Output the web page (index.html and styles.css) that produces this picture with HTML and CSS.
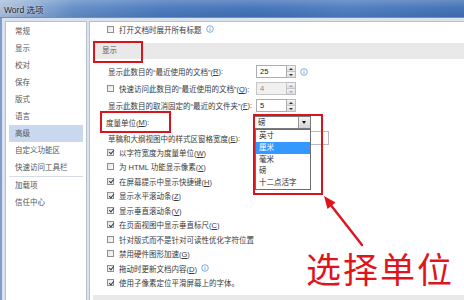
FILE: index.html
```html
<!DOCTYPE html>
<html lang="zh-CN">
<head>
<meta charset="utf-8">
<title>Word 选项</title>
<link rel="stylesheet" href="styles.css">
</head>
<body>
<div class="window">
  <div class="titlebar"><span class="title">Word 选项</span></div>
  <div class="main">
    <nav class="nav">
      <div class="nav-item">常规</div>
      <div class="nav-item">显示</div>
      <div class="nav-item">校对</div>
      <div class="nav-item">保存</div>
      <div class="nav-item">版式</div>
      <div class="nav-item">语言</div>
      <div class="nav-item active">高级</div>
      <div class="nav-item">自定义功能区</div>
      <div class="nav-item">快速访问工具栏</div>
      <div class="nav-sep"></div>
      <div class="nav-item">加载项</div>
      <div class="nav-item">信任中心</div>
    </nav>
    <section class="content">
      <div class="row cbrow top"><span class="cb"></span><span>打开文档时展开所有标题</span><svg class="info" viewBox="0 0 8 8"><circle cx="4" cy="4" r="3.3"/><path d="M4 3.4V6M4 2v.7"/></svg></div>
      <div class="section-head">显示</div>
      <div class="fields">
        <div class="row field">
          <span class="lbl">显示此数目的“最近使用的文档”(<u>R</u>):</span>
          <span class="spin"><span class="box">25</span><span class="btns"><i class="up"></i><i class="dn"></i></span></span>
          <svg class="info" viewBox="0 0 8 8"><circle cx="4" cy="4" r="3.3"/><path d="M4 3.4V6M4 2v.7"/></svg>
        </div>
        <div class="row field">
          <span class="lbl"><span class="cb"></span><span class="cbtext">快速访问此数目的“最近使用的文档”(<u>Q</u>):</span></span>
          <span class="spin disabled"><span class="box">4</span><span class="btns"><i class="up"></i><i class="dn"></i></span></span>
        </div>
        <div class="row field">
          <span class="lbl">显示此数目的取消固定的“最近的文件夹”(<u>F</u>):</span>
          <span class="spin"><span class="box">5</span><span class="btns"><i class="up"></i><i class="dn"></i></span></span>
        </div>
        <div class="row field">
          <span class="lbl unit">度量单位(<u>M</u>):</span>
          <span class="select"><span class="sel-val">磅</span><span class="sel-btn"><i></i></span></span>
        </div>
        <div class="row field short">
          <span class="lbl">草稿和大纲视图中的样式区窗格宽度(<u>E</u>):</span>
          <span class="wide-box"></span>
        </div>
      </div>
      <div class="checks">
        <div class="row cbrow"><span class="cb on"></span><span>以字符宽度为度量单位(<u>W</u>)</span></div>
        <div class="row cbrow"><span class="cb"></span><span>为 HTML 功能显示像素(<u>X</u>)</span></div>
        <div class="row cbrow"><span class="cb on"></span><span>在屏幕提示中显示快捷键(<u>H</u>)</span></div>
        <div class="row cbrow"><span class="cb on"></span><span>显示水平滚动条(<u>Z</u>)</span></div>
        <div class="row cbrow"><span class="cb on"></span><span>显示垂直滚动条(<u>V</u>)</span></div>
        <div class="row cbrow"><span class="cb on"></span><span>在页面视图中显示垂直标尺(<u>C</u>)</span></div>
        <div class="row cbrow"><span class="cb"></span><span>针对版式而不是针对可读性优化字符位置</span></div>
        <div class="row cbrow"><span class="cb"></span><span>禁用硬件图形加速(<u>G</u>)</span></div>
        <div class="row cbrow"><span class="cb on"></span><span>拖动时更新文档内容(<u>D</u>)</span><svg class="info" viewBox="0 0 8 8"><circle cx="4" cy="4" r="3.3"/><path d="M4 3.4V6M4 2v.7"/></svg></div>
        <div class="row cbrow"><span class="cb on"></span><span>使用子像素定位平滑屏幕上的字体。</span></div>
      </div>
      <div class="section-head next"></div>
    </section>
  </div>

  <ul class="droplist">
    <li>英寸</li>
    <li class="hi">厘米</li>
    <li>毫米</li>
    <li>磅</li>
    <li>十二点活字</li>
  </ul>

  <div class="mark mark-show"></div>
  <div class="mark mark-unit"></div>
  <div class="mark mark-drop"></div>
  <svg class="arrow" viewBox="315 190 60 65" width="60" height="65">
    <line x1="362" y1="245" x2="330" y2="204" stroke="#e0141c" stroke-width="2.4" stroke-linecap="round"/>
    <polygon points="324,196 335.5,202.5 327.5,209" fill="#e0141c"/>
  </svg>
  <div class="caption">选择单位</div>
</div>
</body>
</html>
```

FILE: styles.css
```css
* { box-sizing: border-box; }

html, body {
  margin: 0;
  padding: 0;
}

body {
  width: 464px;
  height: 300px;
  overflow: hidden;
  font-family: "Liberation Sans", "Noto Sans CJK SC", sans-serif;
  font-size: 7.5px;
  color: #3a3a3a;
}

.window {
  position: relative;
  width: 464px;
  height: 300px;
  display: flex;
  flex-direction: column;
  background: #d9e2ee;
}

.titlebar {
  flex: none;
  height: 18px;
  display: flex;
  align-items: center;
  padding-left: 4px;
  background:
    linear-gradient(180deg, rgba(255,255,255,0.22) 0%, rgba(255,255,255,0.05) 45%, rgba(0,0,0,0.05) 100%),
    linear-gradient(90deg, #aabfdc 0%, #8aa9d3 7%, #5f8bc6 16%, #4677bb 35%, #3f71b7 55%, #4a7bbe 75%, #3d6db3 100%);
  border-bottom: 1px solid #6f8fbf;
}

.title {
  font-size: 8.5px;
  color: #1c2533;
  text-shadow: 0 0 3px rgba(255,255,255,0.8);
}

.main {
  flex: 1;
  min-height: 0;
  display: flex;
  gap: 2px;
  padding: 3px 0 0 3px;
  border-left: 2px solid #7f9cc8;
}

.nav {
  flex: none;
  width: 82px;
  background: #fff;
  border: 1px solid #b6c1d0;
  border-bottom: none;
  padding-top: 1px;
  color: #555;
}

.nav-item {
  height: 17px;
  line-height: 17px;
  margin: 0 3px;
  padding-left: 6px;
  white-space: nowrap;
}

.nav-item.active {
  background: #c9d8ee;
}

.nav-sep {
  height: 1px;
  margin: 0 3px;
  background: #d6dce6;
}

.content {
  flex: 1;
  min-width: 0;
  background: #fff;
  border-left: 1px solid #b6c1d0;
  border-top: 1px solid #b6c1d0;
  overflow: hidden;
}

.row {
  display: flex;
  align-items: center;
  white-space: nowrap;
}

.cbrow {
  height: 14.5px;
  padding-left: 17px;
}

.cbrow.top {
  height: 14px;
}

.cb {
  position: relative;
  flex: none;
  width: 7px;
  height: 7px;
  margin-right: 5px;
  border: 1px solid #8e8f90;
  background: linear-gradient(135deg, #e6e6e6, #fafafa);
}

.cb.on::after {
  content: "";
  position: absolute;
  left: 1.6px;
  top: -0.5px;
  width: 2px;
  height: 4px;
  border: solid #2c3f5c;
  border-width: 0 1.2px 1.2px 0;
  transform: rotate(40deg);
}

.info {
  flex: none;
  width: 8px;
  height: 8px;
  margin-left: 4px;
  fill: none;
  stroke: #5d9ad8;
  stroke-width: 0.8;
}

.section-head {
  height: 16px;
  line-height: 16px;
  margin: 7px 0 0 3px;
  padding-left: 9px;
  background: #e9e9e9;
  color: #555;
}

.section-head.next {
  margin-top: 5px;
}

.fields {
  margin-top: 4px;
}

.field {
  height: 17px;
  padding-left: 18px;
}

.field.short {
  height: 14px;
}

.lbl {
  flex: none;
  width: 148px;
  display: flex;
  align-items: center;
}

.lbl.unit {
  margin-left: -2px;
  width: 149px;
}

.lbl .cb {
  margin-left: -1px;
}

.spin {
  display: flex;
  height: 13px;
}

.spin .box {
  width: 31px;
  height: 13px;
  line-height: 11px;
  padding-left: 3px;
  border: 1px solid #abadb3;
  color: #222;
}

.spin .btns {
  width: 9px;
  display: flex;
  flex-direction: column;
  border: 1px solid #b9bcc2;
  border-left: none;
}

.spin .btns i {
  flex: 1;
  position: relative;
  background: linear-gradient(#f4f4f4, #dcdcdc);
}

.spin .btns i.up {
  border-bottom: 1px solid #c4c6ca;
}

.spin .btns i::after {
  content: "";
  position: absolute;
  left: 2px;
  border-left: 2px solid transparent;
  border-right: 2px solid transparent;
}

.spin .btns i.up::after {
  top: 1.5px;
  border-bottom: 2px solid #333;
}

.spin .btns i.dn::after {
  top: 1.5px;
  border-top: 2px solid #333;
}

.spin.disabled .box {
  background: #f0f0f0;
  color: #8a8a8a;
  border-color: #c6c6c6;
}

.spin.disabled .btns i::after {
  opacity: 0.35;
}

.select {
  display: flex;
  width: 57px;
  height: 13px;
  margin-left: -1px;
  border: 1px solid #7a7a7a;
  background: #fff;
}

.sel-val {
  flex: 1;
  line-height: 11px;
  padding-left: 3px;
  color: #222;
}

.sel-btn {
  width: 12px;
  border-left: 1px solid #9a9a9a;
  background: linear-gradient(#f2f2f2, #d6d6d6);
  position: relative;
}

.sel-btn i {
  position: absolute;
  left: 3px;
  top: 4px;
  border-left: 2.5px solid transparent;
  border-right: 2.5px solid transparent;
  border-top: 3px solid #111;
}

.wide-box {
  width: 73px;
  height: 14px;
  border: 1px solid #b9bcc2;
  background: #fff;
}

/* overlays */
.droplist {
  position: absolute;
  left: 255px;
  top: 129px;
  width: 56px;
  height: 61px;
  margin: 0;
  padding: 0;
  list-style: none;
  background: #fff;
  border: 1px solid #6e6e6e;
  color: #2a2a2a;
}

.droplist li {
  height: 11.8px;
  line-height: 11.8px;
  padding-left: 3px;
}

.droplist li.hi {
  background: #3399ff;
  color: #fff;
}

.mark {
  position: absolute;
  border: 2px solid #d9141c;
}

.mark-show {
  left: 93px;
  top: 41px;
  width: 50px;
  height: 22px;
}

.mark-unit {
  left: 100px;
  top: 111px;
  width: 71px;
  height: 22px;
}

.mark-drop {
  left: 253px;
  top: 114px;
  width: 70px;
  height: 81px;
}

.arrow {
  position: absolute;
  left: 315px;
  top: 190px;
}

.caption {
  position: absolute;
  left: 306px;
  top: 250px;
  font-family: "Noto Sans CJK SC", sans-serif;
  font-size: 35px;
  line-height: 35px;
  letter-spacing: 2px;
  color: #e0141c;
}
```
